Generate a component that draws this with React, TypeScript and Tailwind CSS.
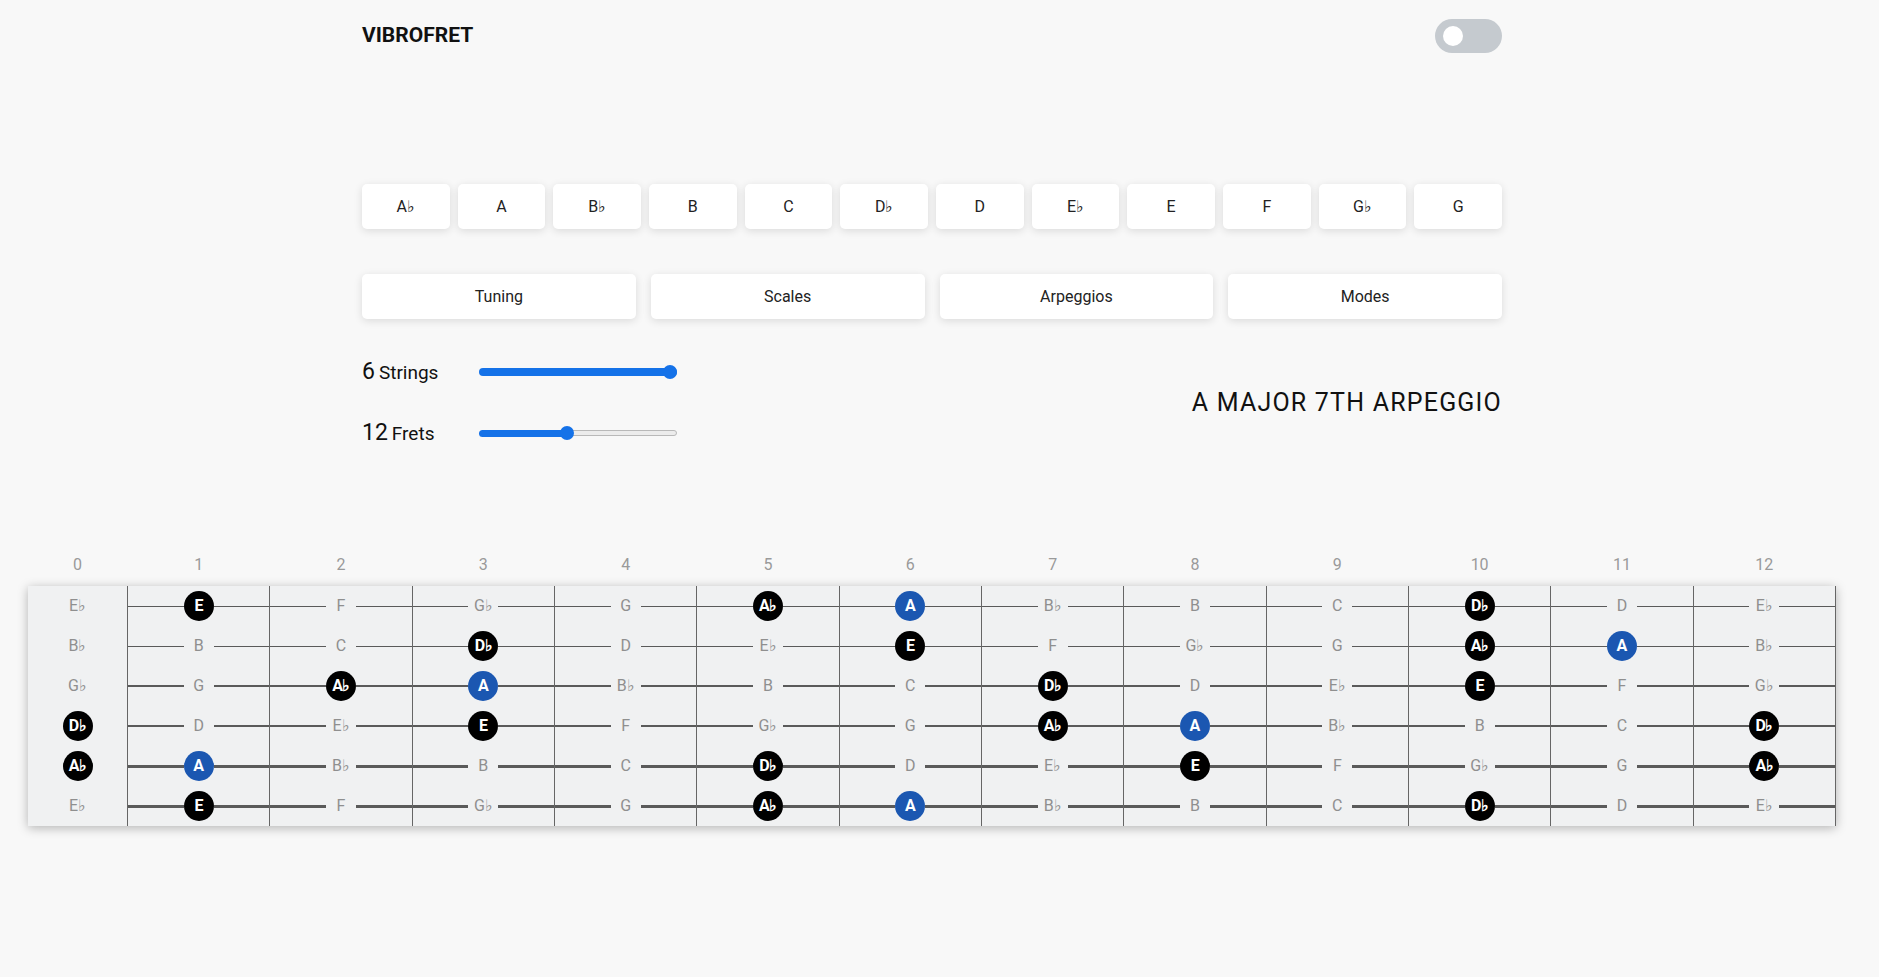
import React, { useState } from "react";

const NOTES = ["A", "Bb", "B", "C", "Db", "D", "Eb", "E", "F", "Gb", "G", "Ab"];
const KEYS = ["Ab", "A", "Bb", "B", "C", "Db", "D", "Eb", "E", "F", "Gb", "G"];
const TUNING = ["Eb", "Bb", "Gb", "Db", "Ab", "Eb"];
const STRING_H = ["h-[1px]", "h-[1px]", "h-[2px]", "h-[2px]", "h-[3px]", "h-[3px]"];
const ROOT = "A";
const CHORD = ["Db", "E", "Ab"];
const FRETS = 12;

// A♭ style label
const label = (n: string) => (n.length > 1 ? n[0] + "\u266D" : n);

const noteAt = (open: string, fret: number) => NOTES[(NOTES.indexOf(open) + fret) % 12];

const NoteDot = ({ note }: { note: string }) => {
  if (note === ROOT) {
    return (
      <div className="flex h-[30px] w-[30px] shrink-0 items-center justify-center rounded-full bg-[#1b57b1] text-[16px] font-bold text-white">
        {label(note)}
      </div>
    );
  }
  if (CHORD.includes(note)) {
    return (
      <div className="flex h-[30px] w-[30px] shrink-0 items-center justify-center rounded-full bg-black text-[16px] font-bold tracking-[-0.5px] text-white">
        {label(note)}
      </div>
    );
  }
  return (
    <div className="flex h-[30px] w-[30px] shrink-0 items-center justify-center text-[16px] text-[#8f8f8f]">
      {label(note)}
    </div>
  );
};

const Slider = ({ pct, full }: { pct: number; full?: boolean }) => {
  return (
    <div className="relative flex h-[14px] w-[198px] items-center">
      {full ? (
        <div className="h-[8px] w-full rounded-full bg-[#1572e8]" />
      ) : (
        <>
          <div className="h-[7px] rounded-l-full bg-[#1572e8]" style={{ width: `${pct}%` }} />
          <div className="h-[6px] flex-1 rounded-r-full border border-[#b9b9b9] bg-[#ececec]" />
        </>
      )}
      <div
        className="absolute top-0 h-[14px] w-[14px] -translate-x-1/2 rounded-full bg-[#1572e8]"
        style={{ left: `${pct}%` }}
      />
    </div>
  );
};

export default function App() {
  const [dark, setDark] = useState(false);
  const [key, setKey] = useState("A");

  return (
    <div className="min-h-screen w-full bg-[#f8f8f8] pr-[15px] text-[#222] [font-family:Roboto,'Liberation_Sans',sans-serif]">
      <div className="mx-auto w-[1140px]">
        {/* header */}
        <div className="flex h-[72px] items-center justify-between">
          <h1 className="text-[21px] font-bold text-[#111]">VIBROFRET</h1>
          <button
            onClick={() => setDark(!dark)}
            className="flex h-[34px] w-[67px] items-center rounded-full bg-[#c5cacf] pl-[8px]"
          >
            <span className="h-[20px] w-[20px] rounded-full bg-white" />
          </button>
        </div>

        {/* keys */}
        <div className="mt-[112px] grid grid-cols-12 gap-[8px]">
          {KEYS.map((k) => (
            <button
              key={k}
              onClick={() => setKey(k)}
              className="flex h-[45px] items-center justify-center rounded-[5px] bg-white text-[16px] text-[#222] shadow-[0_2px_8px_rgba(0,0,0,0.12)]"
            >
              {label(k)}
            </button>
          ))}
        </div>

        {/* tabs */}
        <div className="mt-[45px] grid grid-cols-4 gap-[15px]">
          {["Tuning", "Scales", "Arpeggios", "Modes"].map((t) => (
            <button
              key={t}
              className="flex h-[45px] items-center justify-center rounded-[5px] bg-white text-[16px] text-[#222] shadow-[0_2px_8px_rgba(0,0,0,0.12)]"
            >
              {t}
            </button>
          ))}
        </div>

        {/* sliders + title */}
        <div className="mt-[33px] flex items-center justify-between">
          <div className="flex flex-col gap-[21px]">
            <div className="flex h-[40px] items-center">
              <div className="w-[117px] text-[#111]">
                <span className="text-[23px]">6</span> <span className="text-[19px]">Strings</span>
              </div>
              <Slider pct={96.5} full />
            </div>
            <div className="flex h-[40px] items-center">
              <div className="w-[117px] text-[#111]">
                <span className="text-[23px]">12</span> <span className="text-[19px]">Frets</span>
              </div>
              <Slider pct={44.5} />
            </div>
          </div>
          <h2 className="text-[25px] tracking-[1.2px] text-[#111]">A MAJOR 7TH ARPEGGIO</h2>
        </div>
      </div>

      {/* fretboard */}
      <div className="mx-auto mt-[97px] w-[1808px]">
        <div className="flex h-[30px] items-center text-[16px] text-[#9a9a9a]">
          <div className="w-[99px] text-center">0</div>
          {Array.from({ length: FRETS }, (_, i) => (
            <div key={i} className="flex-1 border-l border-transparent text-center">
              {i + 1}
            </div>
          ))}
          <div className="w-px" />
        </div>

        <div className="mt-[6px] flex bg-[#f0f1f2] shadow-[0_2px_10px_rgba(0,0,0,0.28)]">
          <div className="flex w-[99px] flex-col">
            {TUNING.map((s, r) => (
              <div key={r} className="flex h-[40px] items-center justify-center">
                <NoteDot note={s} />
              </div>
            ))}
          </div>
          {Array.from({ length: FRETS }, (_, f) => (
            <div
              key={f}
              className={`flex flex-1 flex-col border-l border-[#666] ${f === FRETS - 1 ? "border-r" : ""}`}
            >
              {TUNING.map((s, r) => (
                <div key={r} className="flex h-[40px] items-center">
                  <div className={`flex-1 bg-[#5a5a5a] ${STRING_H[r]}`} />
                  <NoteDot note={noteAt(s, f + 1)} />
                  <div className={`flex-1 bg-[#5a5a5a] ${STRING_H[r]}`} />
                </div>
              ))}
            </div>
          ))}
        </div>
      </div>
    </div>
  );
}
